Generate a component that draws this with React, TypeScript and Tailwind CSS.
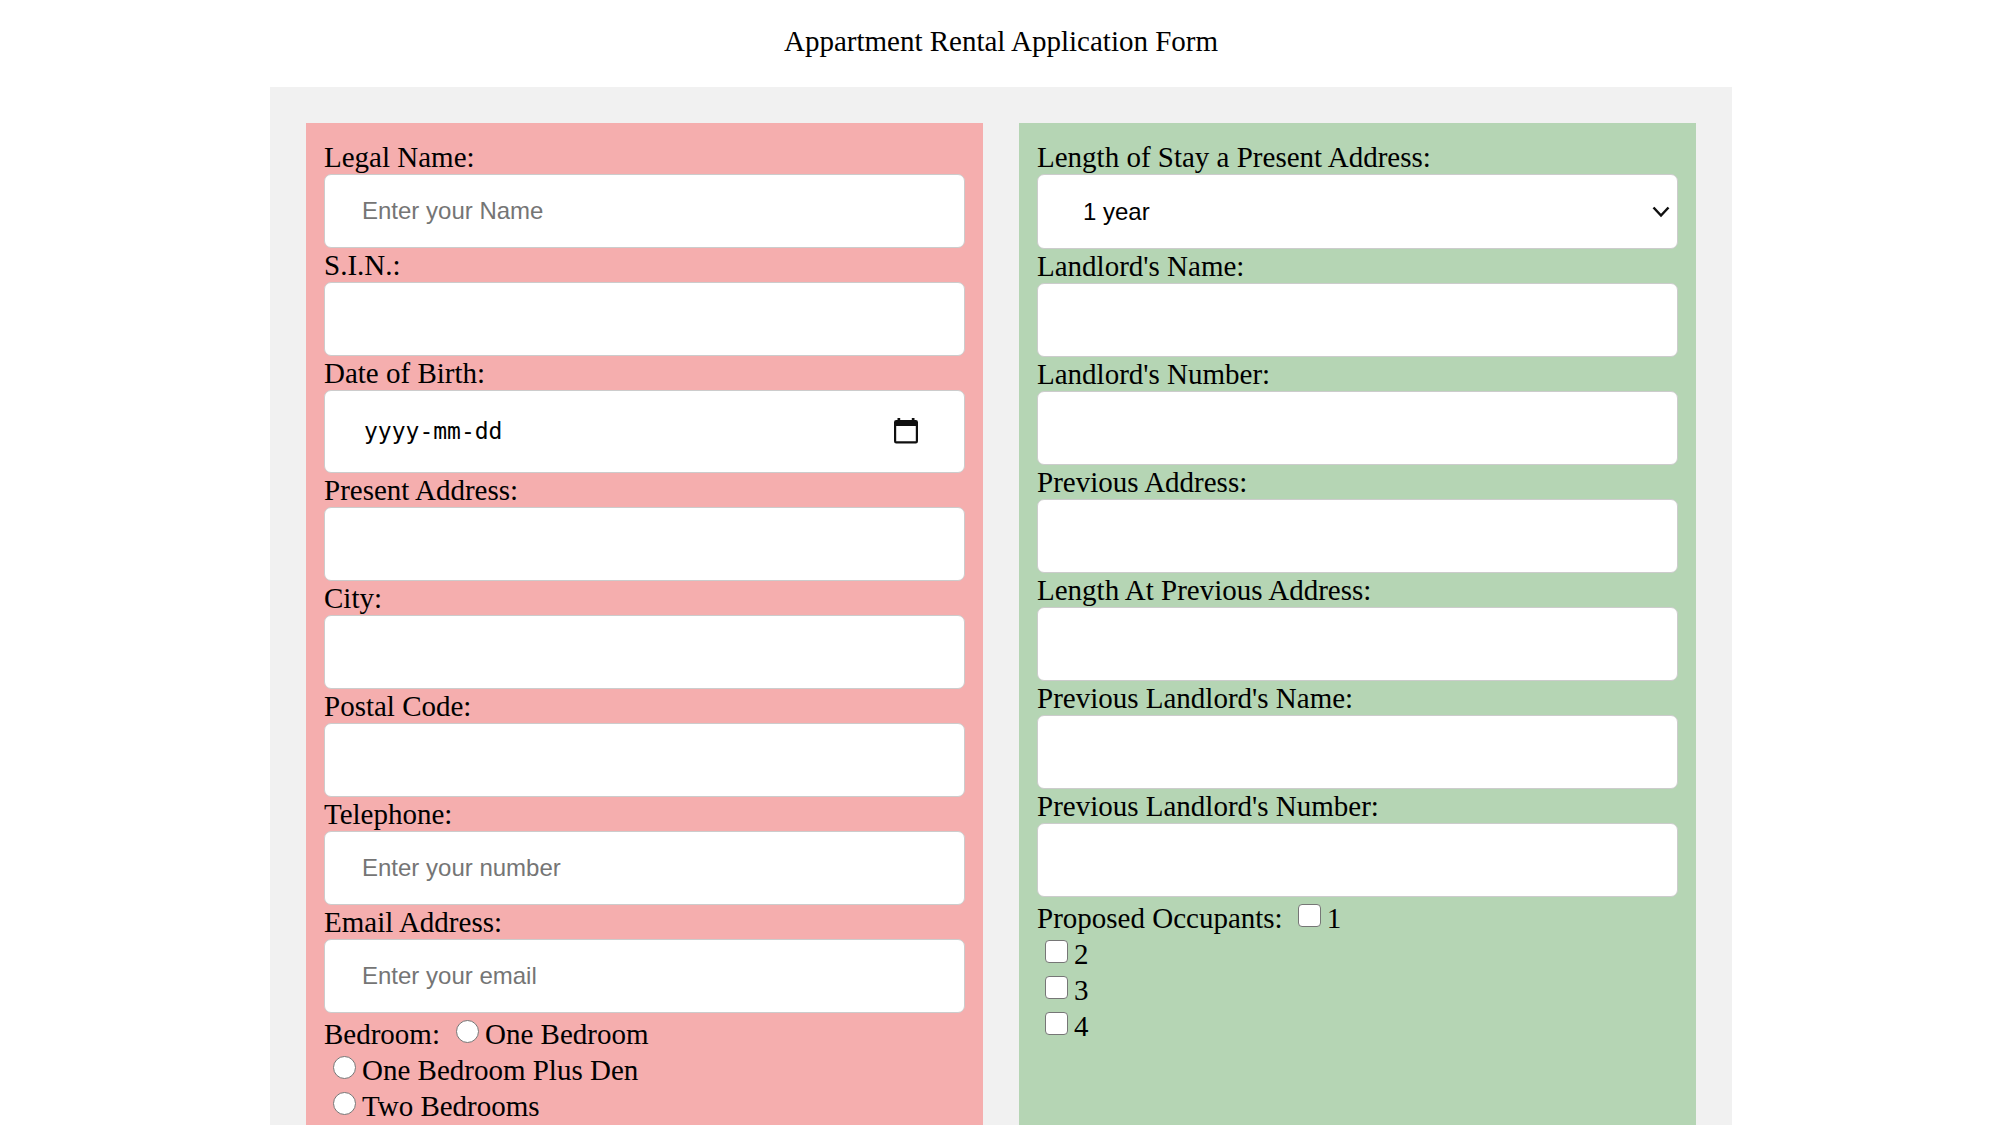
import { useId } from "react";

const fieldBox =
  "block w-full rounded-[7px] border border-[#cccccc] bg-white px-[37px] text-black";
const sans = "font-['Liberation_Sans',Arial,sans-serif] text-[24px]";

function TextField({
  label,
  placeholder,
  type = "text",
}: {
  label: string;
  placeholder?: string;
  type?: string;
}) {
  const id = useId();
  return (
    <div>
      <label htmlFor={id} className="block leading-[34px]">
        {label}
      </label>
      <input
        id={id}
        type={type}
        placeholder={placeholder}
        className={`${fieldBox} ${sans} h-[74px] placeholder:text-[#757575]`}
      />
    </div>
  );
}

function DateField({ label }: { label: string }) {
  const id = useId();
  return (
    <div>
      <label htmlFor={id} className="block leading-[34px]">
        {label}
      </label>
      <div className={`${fieldBox} flex h-[83px] items-center justify-between`}>
        <input
          id={id}
          type="text"
          inputMode="numeric"
          placeholder="yyyy-mm-dd"
          className="min-w-0 flex-1 bg-transparent pl-0.5 font-['DejaVu_Sans_Mono',monospace] text-[23px] outline-none placeholder:text-black"
        />
        <button type="button" aria-label="Open calendar" className="mr-2 pb-0.5">
          <svg width="26" height="26" viewBox="0 0 26 26" className="block">
            <path
              fill="#101010"
              fillRule="evenodd"
              d="M4.5 0h2.7v2h11.6V0h2.7v2h1.3A2.2 2.2 0 0 1 25 4.200V23.300A2.200 2.200 0 0 1 22.800 25.500H3.200A2.200 2.200 0 0 1 1 23.300V4.200A2.200 2.200 0 0 1 3.200 2h1.300zM3.200 8v15.300h19.600V8z"
            />
          </svg>
        </button>
      </div>
    </div>
  );
}

function SelectField({ label, options }: { label: string; options: string[] }) {
  const id = useId();
  return (
    <div>
      <label htmlFor={id} className="block leading-[34px]">
        {label}
      </label>
      <div className="relative">
        <select
          id={id}
          className={`block h-[75px] w-full appearance-none rounded-[7px] border border-[#cccccc] bg-white px-[45px] text-black ${sans}`}
        >
          {options.map((o) => (
            <option key={o}>{o}</option>
          ))}
        </select>
        <svg
          width="18"
          height="12"
          viewBox="0 0 18 12"
          className="pointer-events-none absolute inset-y-0 right-2 my-auto"
        >
          <path d="M1.500 1.500 9 9.500l7.500-8" fill="none" stroke="#101010" strokeWidth="2.500" />
        </svg>
      </div>
    </div>
  );
}

function Choices({
  legend,
  kind,
  options,
}: {
  legend: string;
  kind: "radio" | "checkbox";
  options: string[];
}) {
  const name = useId();
  const shape =
    kind === "radio"
      ? "ml-[9px] rounded-full checked:bg-[radial-gradient(#0075ff_50%,white_55%)]"
      : "ml-2 rounded-[4px] checked:bg-[#0075ff]";
  return (
    <div role="group" aria-label={legend} className="pt-[3px] leading-9">
      {options.map((o, i) => (
        <div key={o} className="flex h-9 items-center">
          {i === 0 && <span className="mr-[7px]">{legend}</span>}
          <label className="flex items-center">
            <input
              type={kind}
              name={name}
              className={`mr-1.5 mb-1.5 size-[23px] appearance-none border border-[#767676] bg-white ${shape}`}
            />
            {o}
          </label>
        </div>
      ))}
    </div>
  );
}

export default function App() {
  return (
    <div className="flex min-h-screen flex-col bg-white pl-[3px] font-['Liberation_Serif','Times_New_Roman',serif] text-[29px] text-black">
      <h1 className="pt-6 pb-[29px] text-center leading-[34px]">
        Appartment Rental Application Form
      </h1>
      <form className="mx-auto grid w-full max-w-[1462px] flex-1 grid-cols-2 gap-9 bg-[#f1f1f1] px-9 pt-9">
        <section className="bg-[#f5aeae] px-[18px] pt-[17px]">
          <TextField label="Legal Name:" placeholder="Enter your Name" />
          <TextField label="S.I.N.:" />
          <DateField label="Date of Birth:" />
          <TextField label="Present Address:" />
          <TextField label="City:" />
          <TextField label="Postal Code:" />
          <TextField label="Telephone:" placeholder="Enter your number" type="tel" />
          <TextField label="Email Address:" placeholder="Enter your email" type="email" />
          <Choices
            legend="Bedroom:"
            kind="radio"
            options={["One Bedroom", "One Bedroom Plus Den", "Two Bedrooms"]}
          />
        </section>
        <section className="bg-[#b5d5b4] px-[18px] pt-[17px]">
          <SelectField
            label="Length of Stay a Present Address:"
            options={["1 year", "2 years", "3 years"]}
          />
          <TextField label="Landlord's Name:" />
          <TextField label="Landlord's Number:" />
          <TextField label="Previous Address:" />
          <TextField label="Length At Previous Address:" />
          <TextField label="Previous Landlord's Name:" />
          <TextField label="Previous Landlord's Number:" />
          <Choices legend="Proposed Occupants:" kind="checkbox" options={["1", "2", "3", "4"]} />
        </section>
      </form>
    </div>
  );
}
